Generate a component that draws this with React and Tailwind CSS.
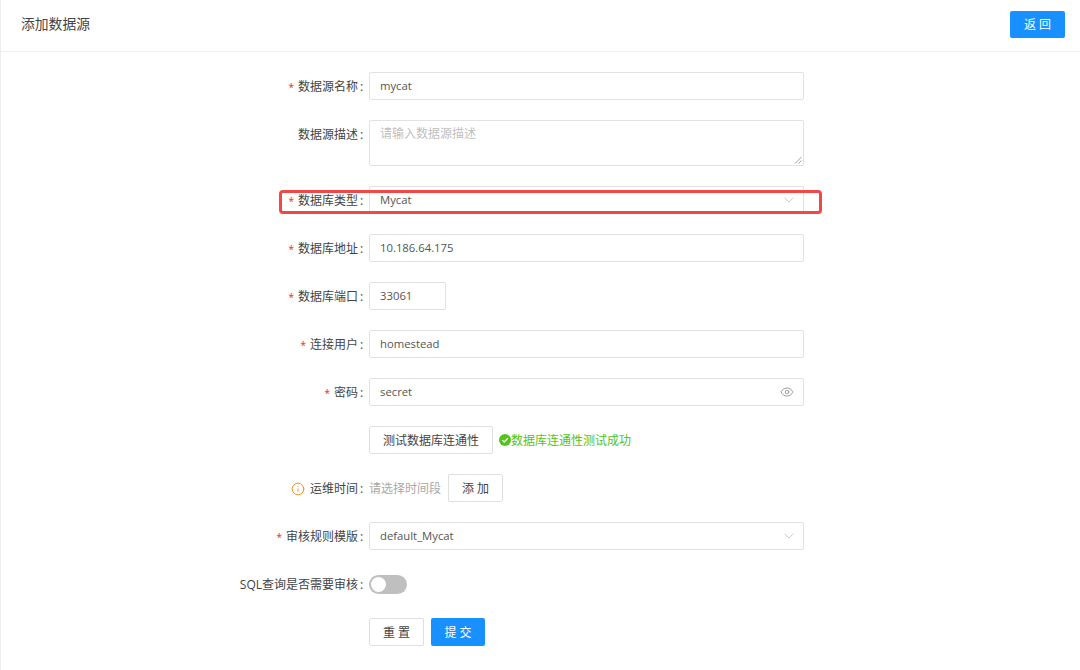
import { ChevronDown, Eye, Info } from "lucide-react";

const font = { fontFamily: '"Open Sans", "Noto Sans CJK SC", sans-serif' };

function Row({ label, required, hint, children, className = "" }) {
  return (
    <div className={`flex ${className}`}>
      <div className="w-[364px] shrink-0 h-7 pt-px flex items-center justify-end text-[12px] text-[#444]">
        {hint && <Info className="w-[14px] h-[14px] text-[#fa8c16] mr-[5px]" strokeWidth={1.6} />}
        {required && <span className="text-[#f5222d] text-[10px] mr-[4px] leading-none">*</span>}
        {label && <span>{label}</span>}
        {label && <span className="w-[6px] pl-[2px]">:</span>}
      </div>
      <div className="ml-[5px] flex-1">{children}</div>
    </div>
  );
}

function TextBox({ value, children, width = "w-[435px]" }) {
  return (
    <div className={`${width} h-7 border border-[#e2e2e2] rounded-[2px] bg-white pl-[10px] pr-[8px] flex items-center justify-between text-[11.3px] text-[#555]`}>
      <span>{value}</span>
      {children}
    </div>
  );
}

function Btn({ children, primary, className = "" }) {
  return (
    <button
      className={`rounded-[2px] pt-px text-[12px] ${primary ? "bg-[#1890ff] text-white" : "bg-white border border-[#dfdfdf] text-[#444]"} ${className}`}
    >
      {children}
    </button>
  );
}

export default function App() {
  return (
    <div className="w-[1080px] h-[670px] bg-white border-l border-[#eeeeee] overflow-hidden relative" style={font}>
      <div className="h-[52px] border-b border-[#f0f0f0] flex items-center justify-between pl-[20px] pr-[15px]">
        <h1 className="text-[13.8px] text-[#444] font-normal mb-[2px]">添加数据源</h1>
        <Btn primary className="w-[55px] h-[27px] mb-[2px] pl-[3px] tracking-[3px]">返回</Btn>
      </div>

      <div className="pt-[20px] -ml-px flex flex-col">
        <Row label="数据源名称" required className="mb-5"><TextBox value="mycat" /></Row>
        <Row label="数据源描述" className="mb-5">
          <div className="w-[435px] h-[46px] border border-[#e2e2e2] rounded-[2px] pl-[10px] pt-[4px] text-[12px] text-[#bfbfbf] relative">
            请输入数据源描述
            <svg className="absolute right-[1px] bottom-[1px]" width="8" height="8" viewBox="0 0 8 8" fill="none" stroke="#888" strokeWidth="0.8">
              <path d="M1 7.5 7.5 1M4.5 7.5 7.5 4.5" />
            </svg>
          </div>
        </Row>
        <Row label="数据库类型" required className="mb-5">
          <TextBox value="Mycat"><ChevronDown className="w-[16px] h-[16px] text-[#bbbbbb] -mr-[2px]" strokeWidth={1.1} /></TextBox>
        </Row>
        <Row label="数据库地址" required className="mb-5"><TextBox value="10.186.64.175" /></Row>
        <Row label="数据库端口" required className="mb-5"><TextBox value="33061" width="w-[77px]" /></Row>
        <Row label="连接用户" required className="mb-5"><TextBox value="homestead" /></Row>
        <Row label="密码" required className="mb-5">
          <TextBox value="secret"><Eye className="w-[14px] h-[14px] text-[#999] mr-[1px]" strokeWidth={1.6} /></TextBox>
        </Row>
        <Row className="mb-5">
          <div className="flex items-center h-7">
            <Btn className="w-[124px] h-7">测试数据库连通性</Btn>
            <svg className="ml-[6px]" width="12" height="12" viewBox="0 0 12 12">
              <circle cx="6" cy="6" r="6" fill="#52c41a" />
              <path d="M3.2 6.1 5.2 8 8.8 4.2" fill="none" stroke="#fff" strokeWidth="1.3" />
            </svg>
            <span className="text-[12px] pt-px text-[#52c41a]">数据库连通性测试成功</span>
          </div>
        </Row>
        <Row label="运维时间" hint className="mb-5">
          <div className="flex items-center h-7">
            <span className="text-[12px] pt-px text-[#a8a8a8]">请选择时间段</span>
            <Btn className="w-[55px] h-7 ml-[7px] pl-[3px] tracking-[3px]">添加</Btn>
          </div>
        </Row>
        <Row label="审核规则模版" required className="mb-5">
          <TextBox value="default_Mycat"><ChevronDown className="w-[16px] h-[16px] text-[#bbbbbb] -mr-[2px]" strokeWidth={1.1} /></TextBox>
        </Row>
        <Row label="SQL查询是否需要审核" className="mb-5">
          <div className="h-7 flex items-center">
            <div className="w-[38px] h-[19px] rounded-full bg-[#bfbfbf] p-[2px]">
              <div className="w-[15px] h-[15px] rounded-full bg-white" />
            </div>
          </div>
        </Row>
        <Row>
          <div className="flex gap-[7px]">
            <Btn className="w-[55px] h-7 pl-[3px] tracking-[3px]">重置</Btn>
            <Btn primary className="w-[54px] h-7 pl-[3px] tracking-[3px]">提交</Btn>
          </div>
        </Row>
      </div>

      <div className="absolute left-[278px] top-[190px] w-[543px] h-[24px] border-[3px] border-[#f04848] rounded-[4px]" />
    </div>
  );
}
